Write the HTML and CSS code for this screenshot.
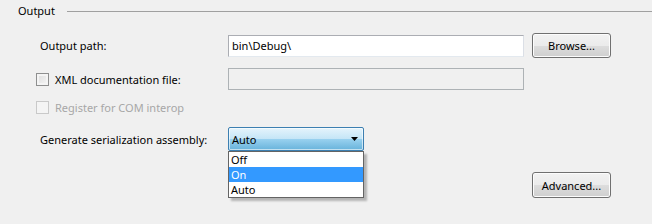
FILE: index.html
```html
<!DOCTYPE html>
<html lang="en">
<head>
  <meta charset="UTF-8">
  <title>Build - Output</title>
  <link rel="stylesheet" href="styles.css">
</head>
<body>
  <div class="group">
    <div class="group-head">
      <span class="group-title">Output</span>
      <span class="group-line"></span>
    </div>

    <div class="rows">
      <div class="row">
        <label class="lbl" for="outPath">Output path:</label>
        <input class="txt" id="outPath" type="text" value="bin\Debug\">
        <button class="btn">Browse...</button>
      </div>

      <div class="row row-xml">
        <label class="chk-lbl"><span class="chk"></span>XML documentation file:</label>
        <input class="txt" type="text" disabled>
      </div>

      <div class="row row-com">
        <label class="chk-lbl disabled"><span class="chk"></span>Register for COM interop</label>
      </div>

      <div class="row row-gen">
        <label class="lbl">Generate serialization assembly:</label>
        <div class="combo">
          <div class="combo-box">
            <span>Auto</span>
            <svg class="arrow" width="7" height="4" viewBox="0 0 7 4"><path d="M0 0h7L3.5 4z" fill="#000"/></svg>
          </div>
          <ul class="combo-list">
            <li>Off</li>
            <li class="sel">On</li>
            <li>Auto</li>
          </ul>
        </div>
      </div>

      <div class="row row-adv">
        <button class="btn">Advanced...</button>
      </div>
    </div>
  </div>
</body>
</html>
```

FILE: styles.css
```css
html {
  font-family: "Noto Sans", "Open Sans", sans-serif;
  font-size: 11px;
}

body {
  margin: 0;
  width: 652px;
  height: 224px;
  background-color: #f0f0f0;
  color: #000;
  overflow: hidden;
}

.group-head {
  display: flex;
  align-items: center;
  height: 22px;
  padding-left: 18px;
}

.group-title {
  line-height: 16px;
}

.group-line {
  flex: 1;
  height: 1px;
  margin-left: 12px;
  background-color: #a0a0a0;
}

.rows {
  margin-top: 11px;
  padding-left: 36px;
}

.row {
  display: flex;
  align-items: center;
  height: 25px;
}

.lbl {
  width: 188px;
  padding-left: 4px;
}

.chk-lbl {
  display: flex;
  align-items: center;
  width: 192px;
}

.chk-lbl.disabled {
  color: #a7a7a7;
}

.chk {
  box-sizing: border-box;
  width: 13px;
  height: 13px;
  margin-right: 6px;
  border: 1px solid #8e8f8f;
  background: linear-gradient(135deg, #dcdcdc, #f6f6f6);
  box-shadow: inset 0 0 0 2px #f4f4f4;
}

.disabled .chk {
  border-color: #c9c9c9;
  background: #f4f4f4;
  box-shadow: none;
}

.txt {
  box-sizing: border-box;
  width: 296px;
  height: 22px;
  margin: 0;
  padding: 0 3px;
  font: inherit;
  color: #000;
  background-color: #fff;
  border: 1px solid #abadb3;
  outline: none;
  border-radius: 0;
}

#outPath {
  border-color: #abadb3 #dbdfe6 #e3e9ef #abadb3;
}

.txt:disabled {
  background-color: #f0f0f0;
  border-color: #adb2b5;
}

.btn {
  box-sizing: border-box;
  width: 79px;
  height: 25px;
  margin-left: 8px;
  padding: 0;
  font: inherit;
  color: #000;
  border: 1px solid #707070;
  border-radius: 3px;
  background: linear-gradient(#f2f2f2 0%, #ebebeb 50%, #dddddd 51%, #cfcfcf 100%);
  box-shadow: inset 0 0 0 1px #fcfcfc;
}

.row-xml {
  margin-top: 10px;
  height: 22px;
}

.row-com {
  margin-top: 6px;
  height: 22px;
}

.row-gen {
  margin-top: 9px;
  height: 24px;
}

.combo {
  position: relative;
}

.combo-box {
  box-sizing: border-box;
  display: flex;
  align-items: center;
  justify-content: space-between;
  width: 136px;
  height: 24px;
  padding: 0 4px 0 3px;
  border: 1px solid #3c7fb1;
  border-radius: 2px;
  background: linear-gradient(#e5f4fc 0%, #c4e5f6 50%, #98d1ef 51%, #68b3db 100%);
  box-shadow: inset 0 0 0 1px rgba(255, 255, 255, 0.6);
}

.arrow {
  margin-right: 1px;
}

.combo-list {
  position: absolute;
  top: 100%;
  left: 0;
  box-sizing: border-box;
  width: 136px;
  margin: 0;
  padding: 0;
  list-style: none;
  background-color: #fff;
  border: 1px solid #646464;
  box-shadow: 3px 3px 2px rgba(0, 0, 0, 0.25);
}

.combo-list li {
  height: 15px;
  line-height: 15px;
  padding-left: 2px;
}

.combo-list li.sel {
  background-color: #3399ff;
  color: #fff;
}

.row-adv {
  justify-content: flex-end;
  width: 575px;
  margin-top: 21px;
  height: 26px;
}

.row-adv .btn {
  height: 26px;
}
```
